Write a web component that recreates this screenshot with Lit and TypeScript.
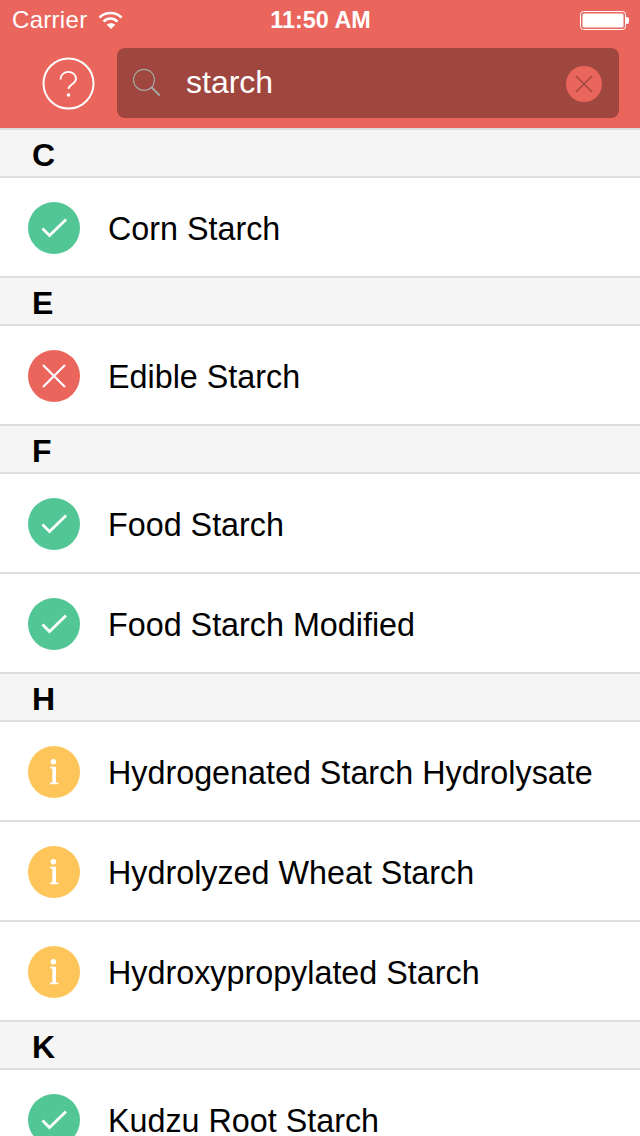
import { LitElement, html, css, svg } from "lit";
import { customElement } from "lit/decorators.js";

type Kind = "ok" | "bad" | "info";
const groups: [string, [Kind, string][]][] = [
  ["C", [["ok", "Corn Starch"]]],
  ["E", [["bad", "Edible Starch"]]],
  ["F", [["ok", "Food Starch"], ["ok", "Food Starch Modified"]]],
  ["H", [["info", "Hydrogenated Starch Hydrolysate"], ["info", "Hydrolyzed Wheat Starch"], ["info", "Hydroxypropylated Starch"]]],
  ["K", [["ok", "Kudzu Root Starch"]]],
];

const icons = {
  ok: svg`<circle cx="26" cy="26" r="26" fill="#52c795"/><path d="M14.5 26.5 L21.5 33.5 L38 17.5" fill="none" stroke="#fff" stroke-width="2.8"/>`,
  bad: svg`<circle cx="26" cy="26" r="26" fill="#ea655c"/><path d="M15 15 L37 37 M37 15 L15 37" fill="none" stroke="#fff" stroke-width="2.2"/>`,
  info: svg`<circle cx="26" cy="26" r="26" fill="#fdc55a"/><circle cx="25.4" cy="15.7" r="2.8" fill="#fff"/><path d="M22 20.8 H28 V36.6 H30.3 V38.3 H22 V36.6 H24.3 V22.5 H22 Z" fill="#fff"/>`,
};

@customElement("app-root")
export class AppRoot extends LitElement {
  static styles = css`
    :host { display: block; width: 640px; height: 1136px; overflow: hidden; background: #fff;
      font-family: "Liberation Sans", Arial, sans-serif; color: #000; }
    .nav { height: 128px; background: #ea655c; border-bottom: 2px solid #dedede; display: flex; flex-direction: column; }
    .status { height: 40px; display: grid; grid-template-columns: 1fr auto 1fr; align-items: center; color: #fff; font-size: 24px; padding: 0 11px 0 12px; }
    .status-left { display: flex; align-items: center; gap: 11px; }
    .carrier { letter-spacing: .3px; }
    .time { font-weight: 700; font-size: 23.4px; }
    .status-right { display: flex; justify-content: flex-end; }
    .bar { display: flex; align-items: flex-start; padding: 8px 21px 0 42px; gap: 22px; }
    .help { width: 53px; height: 53px; margin-top: 9px; flex: none; display: block; }
    .search { flex: 1; height: 70px; border-radius: 8px; background: #9f463e; display: flex; align-items: center; padding: 0 17px 0 15px; }
    .search-text { flex: 1; color: #fff; font-size: 32px; margin: 0 0 2px 24px; }
    .glass { width: 30px; height: 30px; display: block; }
    .clear { width: 36px; height: 36px; display: block; margin-top: 1px; }
    .head { height: 46px; background: #f5f5f5; border-bottom: 2px solid #dedede; font-weight: 700; font-size: 32px; line-height: 50px; padding-left: 32px; }
    .row { height: 96px; padding: 2px 0 0 28px; border-bottom: 2px solid #dedede; display: flex; align-items: center; gap: 28px; font-size: 32.3px; }
    .name { margin-top: 2px; }
    .ic { width: 52px; height: 52px; flex: none; display: block; }
  `;

  render() {
    return html`
      <div class="nav">
        <div class="status">
          <div class="status-left">
            <span class="carrier">Carrier</span>
            <svg width="26" height="20" viewBox="0 0 26 20" fill="none" stroke="#fff" stroke-width="2.6">
              <path d="M1.5 7.5 C7.5 1.5 17.5 1.5 23.5 7.5"/><path d="M5.5 11.5 C9.5 7.5 15.5 7.5 19.5 11.5"/>
              <path d="M13 19 L8.8 14.8 C11 12.8 15 12.8 17.2 14.8 Z" fill="#fff" stroke="none"/>
            </svg>
          </div>
          <span class="time">11:50 AM</span>
          <div class="status-right">
            <svg width="49" height="20" viewBox="0 0 49 20">
              <rect x=".5" y="1.5" width="45" height="18" rx="3" fill="none" stroke="#fff"/>
              <rect x="2.5" y="3.5" width="41" height="14" rx="1.5" fill="#fff"/>
              <path d="M46 7 H47 Q49 7 49 9 V12 Q49 14 47 14 H46 Z" fill="#fff"/>
            </svg>
          </div>
        </div>
        <div class="bar">
          <svg class="help" viewBox="0 0 53 53">
            <circle cx="26.5" cy="26.5" r="25" fill="none" stroke="#fff" stroke-width="2"/>
            <path d="M18.5 22.5 C18.5 12.5 34 12.5 34 22 C34 27 26.5 27.5 26.5 32" fill="none" stroke="#fff" stroke-width="1.8"/>
            <circle cx="26.5" cy="38" r="1.8" fill="#fff"/>
          </svg>
          <div class="search">
            <svg class="glass" viewBox="0 0 30 30" fill="none">
              <circle cx="12" cy="11.8" r="10.5" stroke="#a5a5a0" stroke-width="1.2"/>
              <path d="M19.5 19.3 L27.7 27.5" stroke="#a5a5a0" stroke-width="2.2"/>
            </svg>
            <span class="search-text">starch</span>
            <svg class="clear" viewBox="0 0 36 36">
              <circle cx="18" cy="18" r="18" fill="#ea655c"/>
              <path d="M10 10 L26 26 M26 10 L10 26" stroke="#9f463e" stroke-width="1.5"/>
            </svg>
          </div>
        </div>
      </div>
      ${groups.map(([letter, items]) => html`
        <div class="head">${letter}</div>
        ${items.map(([k, name]) => html`
          <div class="row"><svg class="ic" viewBox="0 0 52 52">${icons[k]}</svg><span class="name">${name}</span></div>
        `)}
      `)}
    `;
  }
}
